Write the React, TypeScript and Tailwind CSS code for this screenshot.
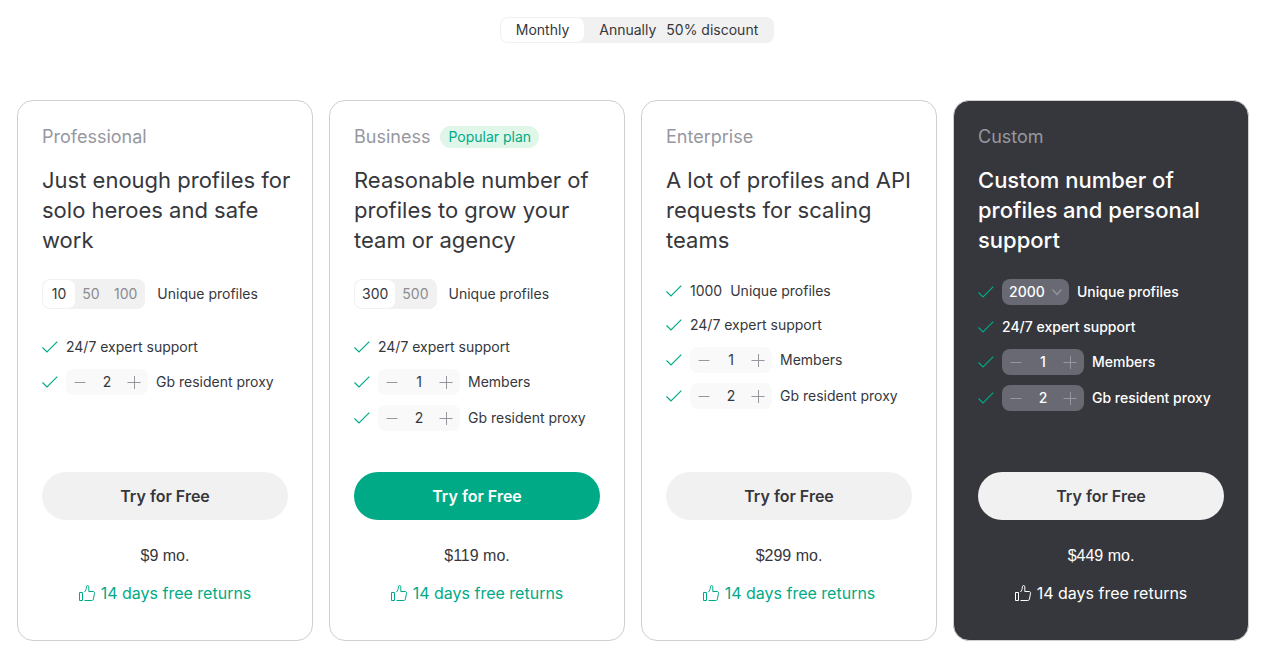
import { useState } from 'react';
import clsx from 'clsx';

type Plan = {
  name: string;
  title: string;
  price: string;
  badge?: string;
  profiles: number[];
  members?: boolean;
  picker: 'tabs' | 'text' | 'select';
  variant: 'light' | 'accent' | 'dark';
};

const plans: Plan[] = [
  {
    name: 'Professional',
    title: 'Just enough profiles for solo heroes and safe work',
    price: '$9 mo.',
    profiles: [10, 50, 100],
    picker: 'tabs',
    variant: 'light',
  },
  {
    name: 'Business',
    title: 'Reasonable number of profiles to grow your team or agency',
    price: '$119 mo.',
    badge: 'Popular plan',
    profiles: [300, 500],
    members: true,
    picker: 'tabs',
    variant: 'accent',
  },
  {
    name: 'Enterprise',
    title: 'A lot of profiles and API requests for scaling teams',
    price: '$299 mo.',
    profiles: [1000],
    members: true,
    picker: 'text',
    variant: 'light',
  },
  {
    name: 'Custom',
    title: 'Custom number of profiles and personal support',
    price: '$449 mo.',
    profiles: [2000, 3000, 5000, 10000],
    members: true,
    picker: 'select',
    variant: 'dark',
  },
];

function CheckIcon() {
  return (
    <svg className="w-4 h-4 mr-2 shrink-0 text-[#00aa87]" viewBox="0 0 16 16" fill="none" stroke="currentColor" aria-hidden>
      <path d="M0.5 8.5 L5 13 L15.3 2.7" strokeWidth="1.2" />
    </svg>
  );
}

function ThumbIcon() {
  return (
    <svg className="w-4 h-4 shrink-0" viewBox="0 0 16 16" fill="none" stroke="currentColor" strokeLinejoin="round" aria-hidden>
      <path d="M0.5 7.5h3v8h-3z" />
      <path d="M5.5 15.5h7.3c.8 0 1.3-.4 1.6-1.2l1.1-6.2c.1-1-.4-1.6-1.3-1.6H9.8V2c0-1-.4-1.5-1.2-1.5S7.5 1 7.4 1.8C7.3 4 6.8 5.5 5.5 7" />
    </svg>
  );
}

function Stepper({ label, initial, dark }: { label: string; initial: number; dark: boolean }) {
  const [value, setValue] = useState(initial);

  return (
    <li className="flex items-center h-[26px]">
      <CheckIcon />
      <div className={clsx('flex items-center h-full rounded-lg mr-2', dark ? 'bg-[#686973]' : 'bg-[#f9f9f9]')}>
        <button
          type="button"
          aria-label={`Fewer: ${label}`}
          className="w-7 h-full grid place-items-center text-[#96979f]"
          onClick={() => setValue(Math.max(1, value - 1))}
        >
          <svg className="w-3 h-3" viewBox="0 0 12 12" stroke="currentColor" aria-hidden>
            <path d="M0.5 6.5h11" />
          </svg>
        </button>
        <output className="w-[26px] text-center">{value}</output>
        <button
          type="button"
          aria-label={`More: ${label}`}
          className="w-7 h-full grid place-items-center text-[#96979f]"
          onClick={() => setValue(value + 1)}
        >
          <svg className="w-3.5 h-3.5" viewBox="0 0 14 14" stroke="currentColor" aria-hidden>
            <path d="M0.5 7.5h13M7.5 1v13" />
          </svg>
        </button>
      </div>
      {label}
    </li>
  );
}

function ProfileTabs({ options }: { options: number[] }) {
  const [selected, setSelected] = useState(options[0]);

  return (
    <div className="flex items-center gap-3 mb-[26px]">
      <div className="flex h-[30px] p-px rounded-lg bg-[#f1f1f1]">
        {options.map((option) => (
          <button
            key={option}
            type="button"
            aria-pressed={option === selected}
            className={clsx('min-w-8 px-[7px] rounded-[7px]', option === selected ? 'bg-white' : 'text-[#8b8c91]')}
            onClick={() => setSelected(option)}
          >
            {option}
          </button>
        ))}
      </div>
      Unique profiles
    </div>
  );
}

function ProfileSelect({ options }: { options: number[] }) {
  return (
    <li className="flex items-center h-[26px]">
      <CheckIcon />
      <div className="grid items-center h-full mr-2">
        <select
          id="profile-count"
          className="col-start-1 row-start-1 w-[67px] h-full pl-[7px] appearance-none rounded-lg bg-[#686973] text-white"
        >
          {options.map((option) => (
            <option key={option}>{option}</option>
          ))}
        </select>
        <svg
          className="col-start-1 row-start-1 justify-self-end z-10 mr-[7px] w-2.5 h-2.5 pointer-events-none text-[#96979f]"
          viewBox="0 0 10 10"
          fill="none"
          stroke="currentColor"
          aria-hidden
        >
          <path d="M0.5 2.5 5 7.5 9.5 2.5" strokeWidth="1.2" />
        </svg>
      </div>
      <label htmlFor="profile-count">Unique profiles</label>
    </li>
  );
}

function PlanCard({ plan }: { plan: Plan }) {
  const dark = plan.variant === 'dark';

  return (
    <article
      className={clsx(
        'flex flex-col py-6 pl-6 pr-4 rounded-2xl border border-[#cfcfd1]',
        dark ? 'bg-[#36373c] text-white font-medium' : 'bg-white text-[#36373c]'
      )}
    >
      <div className="flex items-center gap-2.5 mb-4">
        <h3 className="text-lg leading-6 font-normal text-[#96979f]">{plan.name}</h3>
        {plan.badge && (
          <span className="px-2 h-[22px] leading-[22px] rounded-full bg-[#dff6e9] text-sm text-[#00aa87]">
            {plan.badge}
          </span>
        )}
      </div>
      <h2 className={clsx('mb-6 text-[22px] leading-[30px]', dark ? 'font-medium' : 'font-normal')}>{plan.title}</h2>

      <div className="flex-1 pb-[41px] text-sm leading-6">
        {plan.picker === 'tabs' && <ProfileTabs options={plan.profiles} />}
        <ul className="flex flex-col gap-2.5">
          {plan.picker === 'text' && (
            <li className="flex items-center">
              <CheckIcon />
              <span className="mr-2">{plan.profiles[0]}</span>
              Unique profiles
            </li>
          )}
          {plan.picker === 'select' && <ProfileSelect options={plan.profiles} />}
          <li className="flex items-center">
            <CheckIcon />
            24/7 expert support
          </li>
          {plan.members && <Stepper label="Members" initial={1} dark={dark} />}
          <Stepper label="Gb resident proxy" initial={2} dark={dark} />
        </ul>
      </div>

      <div className="flex flex-col pr-2 pb-3 text-center">
        <button
          type="button"
          className={clsx(
            'h-12 rounded-full text-base font-semibold',
            plan.variant === 'accent' ? 'bg-[#00aa87] text-white' : 'bg-[#f1f1f1] text-[#36373c]'
          )}
        >
          Try for Free
        </button>
        <p className="mt-6 text-base leading-6 font-normal font-['Liberation_Sans',sans-serif]">{plan.price}</p>
        <p
          className={clsx(
            'flex items-center justify-center gap-1.5 mt-3.5 text-base leading-[22px] font-normal',
            !dark && 'text-[#00aa87]'
          )}
        >
          <ThumbIcon />
          14 days free returns
        </p>
      </div>
    </article>
  );
}

export default function App() {
  const [annual, setAnnual] = useState(false);

  return (
    <main className="min-h-screen bg-white pt-[17px] pb-5 font-['Inter',sans-serif] text-[#36373c]">
      <div className="flex justify-center">
        <div className="flex h-[26px] p-px rounded-lg bg-[#f1f1f1] text-sm">
          <button
            type="button"
            aria-pressed={!annual}
            className={clsx('px-[15px] rounded-[7px]', !annual && 'bg-white')}
            onClick={() => setAnnual(false)}
          >
            Monthly
          </button>
          <button
            type="button"
            aria-pressed={annual}
            className={clsx('flex items-center gap-2.5 px-[15px] rounded-[7px]', annual && 'bg-white')}
            onClick={() => setAnnual(true)}
          >
            <span>Annually</span>
            <span>50% discount</span>
          </button>
        </div>
      </div>

      <div className="grid grid-cols-4 gap-4 mt-[57px] pl-[17px] pr-[25px]">
        {plans.map((plan) => (
          <PlanCard key={plan.name} plan={plan} />
        ))}
      </div>
    </main>
  );
}
